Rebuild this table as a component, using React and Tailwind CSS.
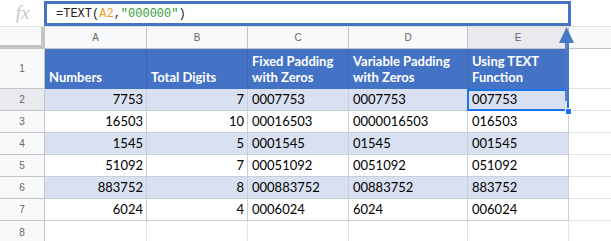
import React from "react";

const cols = ["A", "B", "C", "D", "E"];
const data = [
  ["7753", "7", "0007753", "0007753", "007753"],
  ["16503", "10", "00016503", "0000016503", "016503"],
  ["1545", "5", "0001545", "01545", "001545"],
  ["51092", "7", "00051092", "0051092", "051092"],
  ["883752", "8", "000883752", "00883752", "883752"],
  ["6024", "4", "0006024", "6024", "006024"],
];
const widths = ["w-[102px]", "w-[101px]", "w-[101px]", "w-[119px]", "w-[101px]"];
const cellFont = { fontFamily: "Lato, 'Open Sans', sans-serif" };

export default function App() {
  return (
    <div className="relative w-[611px] h-[241px] overflow-hidden bg-white" style={{ fontFamily: "Arial, 'Liberation Sans', sans-serif" }}>
      {/* formula bar */}
      <div className="flex h-[27px] border-b border-[#e0e0e0] pt-px">
        <div className="w-[44px] flex items-start justify-center pt-[1px]">
          <span className="text-[19px] italic text-[#c4c7cc] leading-[22px] pl-[1px]" style={{ fontFamily: "'Liberation Serif', serif" }}>fx</span>
        </div>
        <div className="w-[527px] h-[25px] border-[3px] border-[#4472c4] flex items-center pl-[9px] text-[12px] text-[#222]" style={{ fontFamily: "'Liberation Mono', monospace" }}>
          <span>=TEXT(</span>
          <span className="text-[#f09a2c]">A2</span>
          <span>,</span>
          <span className="text-[#2e9d3a]">"000000"</span>
          <span>)</span>
        </div>
        <div className="flex-1" />
      </div>

      {/* column headers */}
      <div className="flex h-[22px]">
        <div className="w-[45px] h-[22px] bg-[#f8f9fa] border-r-[4px] border-b-[4px] border-[#c4c4c4]" />
        {cols.map((c, i) => (
          <div key={c} className={`${widths[i]} h-[22px] ${c === "E" ? "bg-[#e8eaed]" : "bg-[#f8f9fa]"} border-r border-b border-[#c4c4c4] flex items-center justify-center text-[10px] text-[#666]`}>
            {c}
          </div>
        ))}
        <div className="flex-1 h-[22px] bg-[#f8f9fa] border-b border-[#c4c4c4]" />
      </div>

      {/* row 1 header */}
      <div className="flex h-[40px]">
        <div className="w-[45px] bg-[#f8f9fa] border-r border-b border-[#c4c4c4] flex items-center justify-center text-[10px] text-[#666]">1</div>
        {["Numbers", "Total Digits", "Fixed Padding with Zeros", "Variable Padding with Zeros", "Using TEXT Function"].map((t, i) => (
          <div key={i} className={`${widths[i]} bg-[#4472c4] border-r border-[#3d66b3] flex items-end pl-[4px] pb-[4px] pr-1 text-white font-bold text-[13px] leading-[16px]`} style={cellFont}>
            <span>{t}</span>
          </div>
        ))}
        <div className="flex-1 border-b border-[#e2e2e2]" />
      </div>

      {/* data rows */}
      {data.map((row, r) => {
        const shaded = r % 2 === 0;
        return (
          <div key={r} className="flex h-[22px]">
            <div className={`w-[45px] ${r === 0 ? "bg-[#e8eaed]" : "bg-[#f8f9fa]"} border-r border-b border-[#c4c4c4] flex items-center justify-center text-[10px] text-[#666]`}>{r + 2}</div>
            {row.map((v, i) => (
              <div key={i} className={`${widths[i]} ${shaded ? "bg-[#d9e0f1]" : "bg-white"} border-r border-b border-[#c8cdd8] flex items-center ${i < 2 ? "justify-end pr-[3px]" : "justify-start pl-[4px]"} text-[13px] text-black`} style={cellFont}>
                {v}
              </div>
            ))}
            <div className="flex-1 border-b border-[#e2e2e2]" />
          </div>
        );
      })}

      {/* row 8 */}
      <div className="flex h-[22px]">
        <div className="w-[45px] bg-[#f8f9fa] border-r border-[#c4c4c4] flex items-center justify-center text-[10px] text-[#666]">8</div>
        {cols.map((c, i) => (
          <div key={c} className={`${widths[i]} border-r border-[#e2e2e2]`} />
        ))}
        <div className="flex-1" />
      </div>

      {/* selection on E2 */}
      <div className="absolute left-[467px] top-[89px] w-[102px] h-[22px] border-2 border-[#1a73e8]" />
      <div className="absolute left-[565px] top-[108px] w-[7px] h-[7px] bg-[#1a73e8] border border-white" />

      {/* arrow */}
      <svg className="absolute left-[555px] top-[24px]" width="24" height="80" viewBox="0 0 24 80">
        <rect x="10" y="16" width="4" height="61" fill="#4a78c8" opacity="0.9" />
        <polygon points="11.5,3 4,19 19,19" fill="#4a78c8" />
      </svg>
    </div>
  );
}
